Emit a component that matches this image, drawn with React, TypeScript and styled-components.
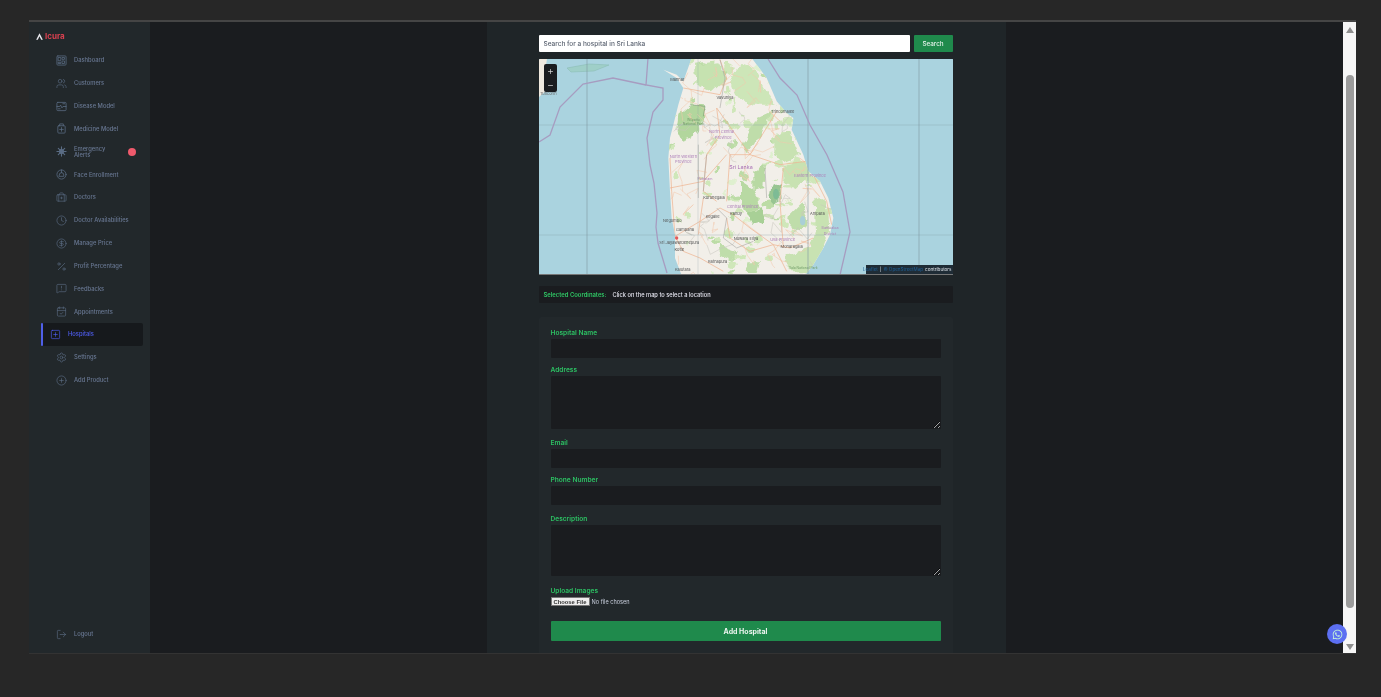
import React from "react";
import styled, { createGlobalStyle } from "styled-components";
import {
  Users, Clock, CircleDollarSign, Percent, MessageSquareWarning, CalendarCheck, SquarePlus, Settings,
  CirclePlus, LogOut, Plus, Minus, BriefcaseMedical,
} from "lucide-react";
import { FaWhatsapp } from "react-icons/fa";

const Global = createGlobalStyle`
  html, body { margin: 0; padding: 0; background: #272727; overflow: hidden; }
  * { box-sizing: border-box; }
`;

const Page = styled.div`
  width: 1381px; height: 697px; background: #272727; padding: 20px 25px 43px 29px;
  font-family: Inter, "Liberation Sans", sans-serif; filter: blur(0.55px);
`;
const Frame = styled.div`
  position: relative; display: flex; height: 634px; border-top: 2px solid #454545;
  border-bottom: 1px solid #333; background: #1a1c1f; overflow: visible;
`;
const Sidebar = styled.aside`
  width: 121px; flex: none; background: #22282b; display: flex; flex-direction: column;
  padding: 7px 0 7px;
`;
const Logo = styled.div`
  display: flex; align-items: center; gap: 1px; height: 14px; padding-left: 7px; margin-bottom: 6px;
  font-size: 8px; font-weight: 700; color: #d8404f;
`;
const LogoMark = styled.svg`width: 7px; height: 7px; flex: none; margin-right: 1px;`;
const Nav = styled.nav`display: flex; flex-direction: column;`;
const Item = styled.div<{ $active?: boolean }>`
  position: relative; display: flex; align-items: center; height: 22.85px; flex: none;
  margin: 0 7px 0 13px;
  padding-left: ${(p) => (p.$active ? "8px" : "14px")}; gap: 7px;
  background: ${(p) => (p.$active ? "#16191c" : "transparent")};
  border-radius: 2px;
  color: ${(p) => (p.$active ? "#4f5ef2" : "#687792")};
  font-size: 5.8px; line-height: 6.2px; font-weight: 500;
  svg { flex: none; color: ${(p) => (p.$active ? "#4f5ef2" : "#5a6c84")}; }
`;
const ActiveBar = styled.span`
  position: absolute; left: -1px; top: 0; bottom: 0; width: 2px; background: #4f5fe8; border-radius: 1px;
`;
const ItemLabel = styled.span`width: 38px;`;
const WideLabel = styled.span`white-space: nowrap;`;
const Badge = styled.span`
  position: absolute; left: 86px; top: 7.5px; width: 8px; height: 8px; border-radius: 50%; background: #ef5a6c;
`;
const LogoutRow = styled(Item)`margin-top: auto;`;

const Main = styled.main`flex: 1; display: flex; justify-content: center; min-width: 0; padding-right: 1px;`;
const Column = styled.div`
  width: 519px; height: 100%; background: #1f2528; padding: 13px 53px 0 52px; overflow: hidden;
`;
const SearchRow = styled.div`display: flex; gap: 4px; height: 17px;`;
const SearchInput = styled.input`
  flex: 1; min-width: 0; border: 0; border-radius: 1px; background: #fff; padding: 0 5px;
  font: 500 6.5px Inter, "Liberation Sans", sans-serif;
  &::placeholder { color: #5a6270; opacity: 1; }
`;
const SearchButton = styled.button`
  width: 39px; border: 0; border-radius: 1px; background: #1f8a4c; color: #e4f2ea; padding: 0;
  font: 500 6.3px Inter, "Liberation Sans", sans-serif;
`;
const MapBox = styled.div`
  position: relative; margin-top: 7px; height: 216px; background: #aad3df; overflow: hidden;
  border-radius: 1px; border-bottom: 1px solid #777;
  svg { display: block; }
`;
const MapSvg = styled.svg`filter: blur(0.35px);`;
const ZoomCtl = styled.div`
  position: absolute; left: 5px; top: 5px; width: 13px; height: 28px; background: #1a1c1f;
  border-radius: 2px; display: flex; flex-direction: column; align-items: center; justify-content: space-around;
  color: #ddd;
`;
const Attribution = styled.div`
  position: absolute; right: 0; bottom: 0; height: 9px; width: 87px; background: #1f2c36;
  display: flex; align-items: center; gap: 2px; justify-content: flex-end; padding-right: 1px;
  font-size: 4.6px; color: #1e5f96; white-space: nowrap;
`;
const AttrWhite = styled.span`color: #dfe4ea;`;
const CoordBar = styled.div`
  margin-top: 11px; height: 17px; background: #1a1c1f; border-radius: 1px; display: flex; align-items: center;
  padding-left: 5px; gap: 6px; font-size: 5.7px; font-weight: 500; color: #e6e6f0;
`;
const CoordKey = styled.span`color: #2fc765; font-weight: 600; font-size: 5.9px;`;
const Form = styled.form`
  margin-top: 14px; background: #22282b; padding: 10px 12px 0; height: 340px; border-radius: 2px;
`;
const Label = styled.label<{ $gap: number }>`
  display: block; margin-top: ${(p) => p.$gap}px; height: 8px; line-height: 8px;
  color: #2cc063; font-size: 6.6px; font-weight: 600;
`;
const TextField = styled.input`
  display: block; width: 100%; height: 19px; margin-top: 2px; background: #1a1c1f; border: 0; border-radius: 1px;
`;
const TextArea = styled.textarea<{ $h: number }>`
  display: block; width: 100%; height: ${(p) => p.$h}px; margin-top: 2px; background: #1a1c1f; border: 0; border-radius: 1px;
  resize: vertical;
`;
const FileInput = styled.input`
  display: block; margin-top: 2px; height: 9px; width: 120px; color: #c8cedc; font-size: 5.6px; font-family: Inter, "Liberation Sans", sans-serif;
  &::file-selector-button {
    font-size: 5.8px; height: 9px; width: 39px; padding: 0; margin-right: 2px; border: 1px solid #777; border-radius: 0; background: #eee; color: #333; font-weight: 600;
  }
`;
const SubmitButton = styled.button`
  display: block; width: 100%; height: 20px; margin-top: 15px; border: 0; border-radius: 1px;
  background: #1f8a4c; color: #eef6f1; padding: 0;
  font: 700 7px Inter, "Liberation Sans", sans-serif;
`;
const Scrollbar = styled.div`
  width: 13px; flex: none; background: #f6f6f6; display: flex; flex-direction: column; align-items: center;
  justify-content: space-between; padding: 5px 0 3px;
`;
const Arrow = styled.span<{ $down?: boolean }>`
  width: 0; height: 0; border-left: 4.5px solid transparent; border-right: 4.5px solid transparent;
  ${(p) => (p.$down ? "border-top: 6px solid #8e8e8e;" : "border-bottom: 6px solid #8e8e8e;")}
`;
const Thumb = styled.span`width: 8px; height: 533px; margin-top: 37px; margin-bottom: 32px; background: #9b9b9b; border-radius: 4px;`;
const Chat = styled.button`
  position: absolute; right: 9px; bottom: 9px; width: 20px; height: 20px; border-radius: 50%; border: 0; padding: 0;
  background: #5c6ff2; color: #c8f8d8; display: flex; align-items: center; justify-content: center;
`;

type IconP = { size?: number; strokeWidth?: number };
const Ico: React.FC<React.PropsWithChildren> = ({ children }) => (
  <svg width="11" height="11" viewBox="0 0 24 24" fill="none" stroke="currentColor" strokeWidth="1.7" strokeLinejoin="round" strokeLinecap="round">{children}</svg>
);
const DashIcon = (_: IconP) => (
  <Ico><rect x="2" y="2" width="20" height="20" rx="2" /><rect x="5.5" y="5.5" width="5" height="7" /><rect x="14" y="5.5" width="4.5" height="4" /><rect x="5.5" y="16" width="5" height="2.5" /><rect x="14" y="13" width="4.5" height="5.5" /></Ico>
);
const DiseaseIcon = (_: IconP) => (
  <Ico><rect x="2" y="3" width="20" height="18" rx="2" /><path d="M2 12h6l2-3 3 6 2-3h7" /><path d="M15 6h4M5 17h4" /></Ico>
);
const MedicineIcon = (_: IconP) => (
  <Ico><rect x="4" y="6" width="16" height="16" rx="2" /><path d="M8 6V2h8v4M12 10v8M8 14h8" /></Ico>
);
const EmergencyIcon = (_: IconP) => (
  <Ico><circle cx="12" cy="12" r="5" fill="currentColor" /><path d="M12 2v20M2 12h20M5 5l14 14M19 5L5 19" strokeWidth="2.4" /></Ico>
);
const FaceIcon = (_: IconP) => (
  <Ico><circle cx="12" cy="12" r="10" /><path d="M7 13a5 5 0 0 1 10 0v3H7zM12 2v6" /></Ico>
);
const HexIcon = (_: IconP) => <Settings size={11} strokeWidth={1.4} />;

const nav: [any, string][] = [
  [DashIcon, "Dashboard"], [Users, "Customers"], [DiseaseIcon, "Disease Model"],
  [MedicineIcon, "Medicine Model"], [EmergencyIcon, "Emergency Alerts"], [FaceIcon, "Face Enrollment"],
  [BriefcaseMedical, "Doctors"], [Clock, "Doctor Availabilities"], [CircleDollarSign, "Manage Price"],
  [Percent, "Profit Percentage"], [MessageSquareWarning, "Feedbacks"], [CalendarCheck, "Appointments"],
];

const land = "M155 0 L335 0 L380 60 L410 130 L440 165 L460 180 L455 215 L490 290 L505 340 L540 370 L565 420 L580 480 L570 530 L550 570 L520 620 L495 652 L125 652 L105 600 L105 530 L95 480 L90 400 L85 300 L90 240 L100 200 L115 140 L130 90 L110 60 L70 35 L110 50 L130 70 Z";
const forests: [string, string][] = [
  ["115,170 150,140 195,145 190,200 160,235 125,245 110,210", "#b2d69d"],
  ["165,20 230,10 260,60 215,100 170,80", "#c6e2b0"],
  ["300,15 340,30 370,90 410,140 340,140 290,120 270,70", "#cde6b8"],
  ["310,260 350,180 395,160 365,225 320,290", "#bfddaa"],
  ["400,235 450,220 480,290 430,310 400,280", "#c8e2b2"],
  ["430,320 500,310 510,350 470,390 430,370", "#c8e2b2"],
  ["340,340 375,320 370,390 340,400", "#b8d9a3"],
  ["300,370 345,400 360,450 320,470 300,420", "#b8d9a3"],
  ["390,390 420,375 425,425 400,440 385,420", "#98c592"],
  ["450,470 490,430 510,500 470,520 445,500", "#bfddaa"],
  ["320,470 365,450 375,490 340,500", "#a8d096"],
  ["520,410 560,430 570,520 540,600 510,640 440,640 440,590 510,570 525,520", "#c8e2b2"],
  ["235,560 290,580 280,610 240,590", "#bfddaa"],
  ["325,610 360,610 350,645 320,645", "#bfddaa"],
];
const roads = [
  "105,535 180,490 240,450 280,470 330,510 400,560 450,570 520,540",
  "105,535 130,580 180,600 250,640",
  "230,150 240,230 200,290 190,400 230,430",
  "230,150 330,290 270,290 260,430",
  "410,160 330,290 420,320 500,310 560,430 575,500",
  "90,390 190,370 260,290",
  "240,110 260,60 240,5",
  "240,110 130,90",
  "105,535 95,400 90,300",
  "260,480 270,540 330,580 400,560 440,640",
  "430,330 420,430 430,570",
  "190,420 180,490 175,530",
];
const greys = [
  "240,150 255,60 240,5",
  "200,290 195,340 190,400",
  "230,450 260,480 250,540 290,570 340,550",
  "375,330 380,420",
  "175,260 175,420",
];
const labels: [number, number, string, string, number][] = [
  [112, 68, "Mannar", "#555", 12], [255, 122, "Vavuniya", "#555", 12], [428, 164, "Trincomalee", "#555", 12],
  [160, 188, "Wilpattu", "#6f9a66", 10], [160, 202, "National Park", "#6f9a66", 10],
  [245, 226, "North Central", "#ad7fb8", 12], [250, 243, "Province", "#ad7fb8", 12],
  [303, 332, "Sri Lanka", "#a86eb4", 16], [130, 299, "North Western", "#ad7fb8", 12], [130, 315, "Province", "#ad7fb8", 12],
  [195, 367, "Puttalam", "#ad7fb8", 11], [222, 424, "Kurunegala", "#555", 12], [308, 449, "Central Province", "#ad7fb8", 12],
  [288, 470, "Kandy", "#555", 12], [218, 481, "Kegalle", "#555", 12], [97, 491, "Negombo", "#555", 12],
  [135, 518, "Gampaha", "#555", 12], [118, 557, "Sri Jayawardenepura", "#555", 12], [118, 580, "Kotte", "#444", 12],
  [318, 547, "Nuwara Eliya", "#555", 12], [428, 550, "Uva Province", "#ad7fb8", 12], [455, 570, "Monaragala", "#555", 12],
  [510, 358, "Eastern Province", "#ad7fb8", 12], [532, 470, "Ampara", "#555", 12], [570, 513, "Batticaloa", "#ad7fb8", 11],
  [570, 530, "District", "#ad7fb8", 11], [490, 634, "Yala National Park", "#6f9a66", 10], [233, 615, "Ratnapura", "#555", 12],
  [128, 638, "Kalutara", "#555", 12],
];

// Deterministic scatter of small patches and minor roads, to give the tile its texture.
const rng = (seed: number) => () => {
  seed = (seed * 1664525 + 1013904223) % 4294967296;
  return seed / 4294967296;
};
const r1 = rng(7);
const patches = Array.from({ length: 170 }, () => {
  const x = 90 + r1() * 490;
  const y = r1() * 650;
  const east = x > 270 || y < 150;
  const c = r1();
  return {
    x, y,
    rx: 4 + r1() * (east ? 14 : 8), ry: 3 + r1() * (east ? 12 : 7),
    fill: c < 0.55 ? "#cfe7b9" : c < 0.85 ? "#bcdca6" : "#dff0cf",
    show: r1() < (east ? 0.95 : 0.55),
  };
}).filter((p) => p.show);
const r2 = rng(23);
const minor = Array.from({ length: 70 }, () => {
  let x = 95 + r2() * 470;
  let y = r2() * 650;
  const pts = [`${x.toFixed(0)},${y.toFixed(0)}`];
  for (let i = 0; i < 4; i++) {
    x += (r2() - 0.5) * 70;
    y += (r2() - 0.5) * 70;
    pts.push(`${x.toFixed(0)},${y.toFixed(0)}`);
  }
  return { pts: pts.join(" "), stroke: r2() < 0.7 ? "#f1c9ac" : "#c9c6be" };
});

const MapArt = () => (
  <MapSvg width="414" height="216" viewBox="0 0 414 216">
    <defs>
      <clipPath id="landClip"><path d={land} /></clipPath>
      <filter id="organic" x="-5%" y="-5%" width="110%" height="110%">
        <feTurbulence type="fractalNoise" baseFrequency="0.035" numOctaves="3" seed="4" />
        <feDisplacementMap in="SourceGraphic" scale="26" xChannelSelector="R" yChannelSelector="G" />
      </filter>
    </defs>
    <rect width="414" height="216" fill="#aad3df" />
    <path d="M0 0 L8 0 L6 12 L9 30 L0 38 Z" fill="#efe9df" />
    <text x="1" y="36" fontSize="4" fill="#666" fontFamily="Inter, 'Liberation Sans', sans-serif">Tuticorin</text>
    <path d="M28 9 L50 5 L70 6 L55 12 L32 13 Z" fill="#9fcfc8" stroke="#8cbdb5" strokeWidth="0.6" />
    <g transform="translate(101,-1) scale(0.33333)">
      <path d={land} fill="#f2efe9" />
      <g clipPath="url(#landClip)">
        <g filter="url(#organic)">
          {patches.map((p, i) => <ellipse key={i} cx={p.x} cy={p.y} rx={p.rx} ry={p.ry} fill={p.fill} />)}
          {forests.map(([pts, c], i) => <polygon key={i} points={pts} fill={c} />)}
        </g>
        {minor.map((m, i) => <polyline key={i} points={m.pts} fill="none" stroke={m.stroke} strokeWidth="1.6" />)}
        {roads.map((p, i) => <polyline key={i} points={p} fill="none" stroke="#efb593" strokeWidth="2.2" />)}
        {greys.map((p, i) => <polyline key={i} points={p} fill="none" stroke="#a8a8a4" strokeWidth="1.8" />)}
        <polyline points="150,140 195,145 190,175" fill="none" stroke="#6f8f6a" strokeWidth="1.6" />
        <ellipse cx="408" cy="408" rx="9" ry="16" fill="#7dbb95" />
        <ellipse cx="488" cy="488" rx="8" ry="14" fill="#a9cfd6" />
      </g>
      <circle cx="110" cy="540" r="5" fill="#e25a5a" />
      {labels.map(([x, y, t, c, s], i) => (
        <text key={i} x={x} y={y} fill={c} fontSize={s} textAnchor="middle" fontFamily="Inter, 'Liberation Sans', sans-serif">{t}</text>
      ))}
    </g>
    <g fill="none" stroke="#8199a2" strokeWidth="0.8">
      <path d="M48 0 V216 M269 0 V216 M380 0 V216" opacity="0.75" />
      <path d="M159 0 V216" opacity="0.3" />
      <path d="M0 66 H414 M0 176 H414" opacity="0.4" />
    </g>
    <g fill="none" stroke="#a79cc0" strokeWidth="1.3">
      <polyline points="109,-1 107,26 124,29 124,41 114,53 108,79 111,106 115,124 118,154 117,168 119,184 128,214" />
      <polyline points="107,26 74,19 44,25 21,48 11,76 0,83" />
      <polyline points="229,0 241,19 258,36 271,66 288,96 304,133 311,173 301,216" />
    </g>
  </MapSvg>
);

export default function App() {
  return (
    <>
      <Global />
      <Page>
        <Frame>
          <Sidebar>
            <Logo>
              <LogoMark viewBox="0 0 10 10"><path d="M5 0.5 L9.8 9.5 H7.4 L5 4.5 L2.6 9.5 H0.2 Z" fill="#e8e8ee" /></LogoMark>
              Icura
            </Logo>
            <Nav>
              {nav.map(([Icon, name]) => {
                const alert = name === "Emergency Alerts";
                return (
                  <Item key={name}>
                    <Icon size={11} strokeWidth={1.4} />
                    {alert ? <ItemLabel>{name}</ItemLabel> : <WideLabel>{name}</WideLabel>}
                    {alert && <Badge />}
                  </Item>
                );
              })}
              <Item $active>
                <ActiveBar />
                <SquarePlus size={11} strokeWidth={1.4} />
                <WideLabel>Hospitals</WideLabel>
              </Item>
              <Item><HexIcon /><WideLabel>Settings</WideLabel></Item>
              <Item><CirclePlus size={11} strokeWidth={1.4} /><WideLabel>Add Product</WideLabel></Item>
            </Nav>
            <LogoutRow><LogOut size={11} strokeWidth={1.4} /><WideLabel>Logout</WideLabel></LogoutRow>
          </Sidebar>
          <Main>
            <Column>
              <SearchRow>
                <SearchInput placeholder="Search for a hospital in Sri Lanka" />
                <SearchButton type="button">Search</SearchButton>
              </SearchRow>
              <MapBox>
                <MapArt />
                <ZoomCtl><Plus size={7} strokeWidth={2.4} /><Minus size={7} strokeWidth={2.4} /></ZoomCtl>
                <Attribution>Leaflet <AttrWhite>|</AttrWhite> © OpenStreetMap <AttrWhite>contributors</AttrWhite></Attribution>
              </MapBox>
              <CoordBar><CoordKey>Selected Coordinates:</CoordKey> Click on the map to select a location</CoordBar>
              <Form>
                <Label $gap={2}>Hospital Name</Label>
                <TextField />
                <Label $gap={8}>Address</Label>
                <TextArea $h={53} />
                <Label $gap={10}>Email</Label>
                <TextField />
                <Label $gap={8}>Phone Number</Label>
                <TextField />
                <Label $gap={10}>Description</Label>
                <TextArea $h={51} />
                <Label $gap={11}>Upload Images</Label>
                <FileInput type="file" />
                <SubmitButton type="button">Add Hospital</SubmitButton>
              </Form>
            </Column>
          </Main>
          <Scrollbar>
            <Arrow />
            <Thumb />
            <Arrow $down />
          </Scrollbar>
          <Chat type="button"><FaWhatsapp size={11} /></Chat>
        </Frame>
      </Page>
    </>
  );
}
